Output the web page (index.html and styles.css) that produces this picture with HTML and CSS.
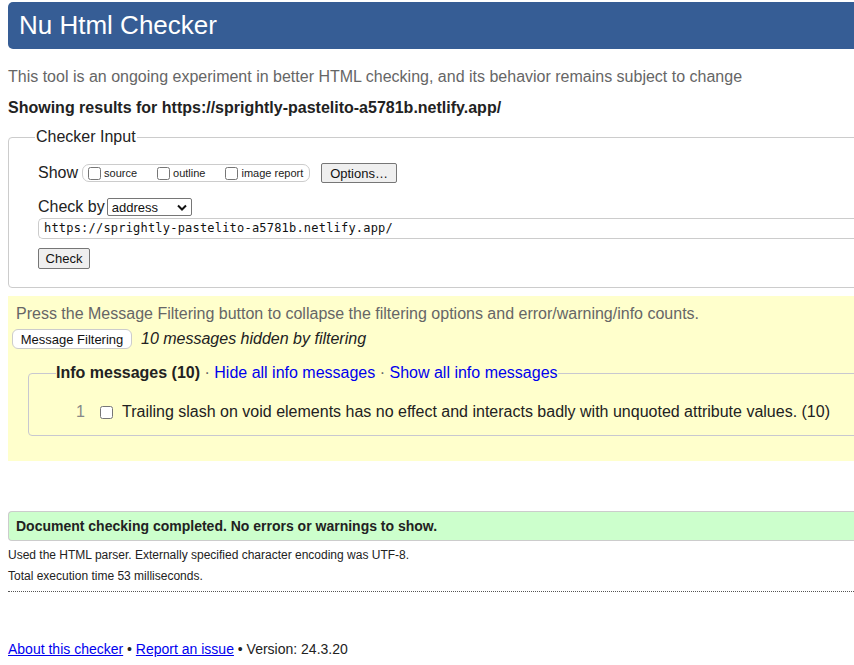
FILE: index.html
```html
<!DOCTYPE html>
<html>
<head>
<meta charset="utf-8">
<title>Nu Html Checker</title>
<link rel="stylesheet" href="styles.css">
</head>
<body>
<div class="page">
  <h1 class="banner">Nu Html Checker</h1>
  <p class="intro">This tool is an ongoing experiment in better HTML checking, and its behavior remains subject to change</p>
  <p class="showing">Showing results for https://sprightly-pastelito-a5781b.netlify.app/</p>

  <fieldset class="input-box">
    <legend>Checker Input</legend>
    <div class="row show-row">
      <span class="lbl">Show</span>
      <span class="pill">
        <label><input type="checkbox">source</label>
        <label><input type="checkbox">outline</label>
        <label><input type="checkbox">image report</label>
      </span>
      <button class="btn">Options…</button>
    </div>
    <div class="row by-row">
      <span class="lbl">Check by</span>
      <span class="select">address<svg width="10" height="7" viewBox="0 0 10 7"><path d="M1 1.5 L5 5.5 L9 1.5" fill="none" stroke="#111" stroke-width="2"/></svg></span>
    </div>
    <div class="url">https://sprightly-pastelito-a5781b.netlify.app/</div>
    <button class="btn check">Check</button>
  </fieldset>

  <div class="filters">
    <p class="press">Press the Message Filtering button to collapse the filtering options and error/warning/info counts.</p>
    <div class="filter-row">
      <button class="mf">Message Filtering</button>
      <em>10 messages hidden by filtering</em>
    </div>
    <fieldset class="info">
      <legend><b>Info messages (10)</b> · <a>Hide all info messages</a> · <a>Show all info messages</a></legend>
      <div class="msg">
        <span class="num">1</span>
        <input type="checkbox">
        <span>Trailing slash on void elements has no effect and interacts badly with unquoted attribute values. (10)</span>
      </div>
    </fieldset>
  </div>

  <p class="success">Document checking completed. No errors or warnings to show.</p>
  <p class="small">Used the HTML parser. Externally specified character encoding was UTF-8.</p>
  <p class="small">Total execution time 53 milliseconds.</p>
  <hr class="dots">

  <p class="footer"><a href="#">About this checker</a> • <a href="#">Report an issue</a> • Version: 24.3.20</p>
</div>
</body>
</html>
```

FILE: styles.css
```css
html { overflow: hidden; }
body {
  margin: 0;
  font-family: "Liberation Sans", Arial, sans-serif;
  color: #222;
  background: #fff;
}
.page {
  width: 1000px;
  padding: 2px 0 0 8px;
}
.banner {
  margin: 0;
  height: 47px;
  background: #365d95;
  color: #fff;
  font-weight: normal;
  font-size: 26px;
  line-height: 47px;
  padding-left: 11px;
  border-radius: 5px 0 0 5px;
}
.intro {
  margin: 18px 0 0;
  font-size: 16px;
  line-height: 19px;
  color: #666;
}
.showing {
  margin: 12px 0 0;
  font-size: 16px;
  line-height: 19px;
  font-weight: bold;
}
.input-box {
  margin: 11px 0 0;
  padding: 18px 0 18px 29px;
  border: 1px solid #ccc;
  border-radius: 4px;
  min-width: 0;
}
.input-box legend {
  font-size: 16px;
  padding: 0 1px;
  margin-left: -3px;
  color: #222;
  line-height: 18px;
}
.row { display: flex; align-items: center; }
.lbl { font-size: 16px; }
.show-row { height: 20px; margin-top: -1px; }
.pill {
  display: inline-flex;
  align-items: center;
  margin-left: 4px;
  height: 18px;
  width: 228px;
  border: 1px solid #ccc;
  border-radius: 7px;
  font-size: 11px;
  padding-left: 5px;
  box-sizing: border-box;
}
.pill label { display: inline-flex; align-items: center; margin-right: 20px; }
.pill label:last-child { margin-right: 0; }
.pill input { margin: 0 3px 0 0; width: 13px; height: 13px; }
.btn {
  font-family: "Liberation Sans", Arial, sans-serif;
  font-size: 13px;
  background: #efefef;
  border: 1px solid #767676;
  border-radius: 2px;
  padding: 1px 8px;
  height: 20px;
  color: #111;
}
.show-row .btn { margin-left: 11px; width: 76px; padding: 0; }
.by-row { margin-top: 14px; height: 20px; }
.select {
  display: inline-flex;
  align-items: center;
  justify-content: space-between;
  width: 85px;
  height: 18px;
  box-sizing: border-box;
  border: 1px solid #767676;
  border-radius: 2px;
  font-size: 13px;
  padding: 0 4px 0 4px;
  margin-left: 2px;
  color: #111;
}
.url {
  margin-top: 1px;
  height: 21px;
  box-sizing: border-box;
  border: 1px solid #ccc;
  border-right: none;
  border-radius: 5px 0 0 5px;
  font-family: "DejaVu Sans Mono", "Liberation Mono", monospace;
  font-size: 12px;
  line-height: 19px;
  padding-left: 5px;
  color: #111;
  letter-spacing: 0.2px;
}
.check { margin-top: 9px; width: 52px; padding: 0; height: 21px; display: block; }
.filters {
  margin-top: 8px;
  background: #ffffcc;
  height: 165px;
  padding: 8px 0 0 0;
  box-sizing: border-box;
}
.press {
  margin: 0 0 0 8px;
  font-size: 16px;
  line-height: 19px;
  color: #666;
}
.filter-row { display: flex; align-items: center; margin-top: 6px; margin-left: 4px; }
.mf {
  font-family: "Liberation Sans", Arial, sans-serif;
  font-size: 13px;
  background: #fff;
  border: 1px solid #ccc;
  border-radius: 6px;
  height: 20px;
  width: 120px;
  padding: 0;
  color: #111;
}
.filter-row em { margin-left: 9px; font-size: 16px; }
.info {
  margin: 14px 0 0 20px;
  border: 1px solid #c8c8d0;
  border-radius: 4px;
  padding: 20px 0 14px 0;
  min-width: 0;
}
.info legend {
  margin-left: 27px;
  padding: 0;
  font-size: 16px;
  line-height: 20px;
  color: #666;
}
.info legend b { color: #222; }
.info legend a { color: #0000ee; }
.msg { display: flex; align-items: center; font-size: 16px; }
.num { width: 56px; text-align: right; color: #888; }
.msg input { margin: 0 9px 0 15px; width: 13px; height: 13px; }
.success {
  margin: 50px 0 0;
  background: #ccffcc;
  border: 1px solid #ccc;
  border-right: none;
  border-radius: 4px 0 0 4px;
  height: 30px;
  box-sizing: border-box;
  padding-left: 7px;
  font-size: 14px;
  font-weight: bold;
  line-height: 28px;
}
.small {
  margin: 5px 0 0;
  font-size: 12px;
  line-height: 16px;
}
.small + .small { margin-top: 5px; }
.success + .small { margin-top: 6px; }
.dots {
  margin: 7px 0 0;
  border: none;
  border-top: 1px dotted #555;
  height: 0;
}
.footer {
  margin: 49px 0 0;
  font-size: 14px;
  line-height: 17px;
}
.footer a { color: #0000ee; }
```
